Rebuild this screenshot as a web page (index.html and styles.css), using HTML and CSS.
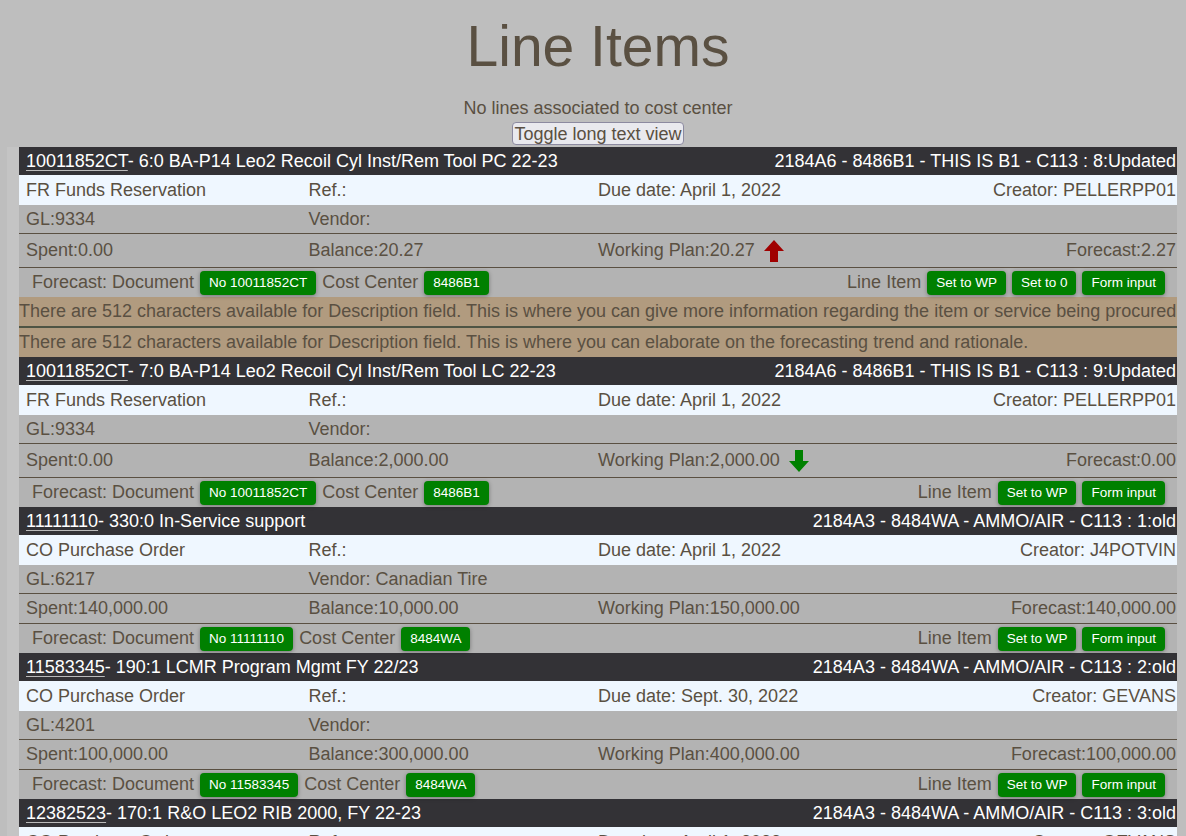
FILE: index.html
```html
<!DOCTYPE html>
<html>
<head>
<meta charset="utf-8">
<title>Line Items</title>
<link rel="stylesheet" href="styles.css">
</head>
<body>
<h1 class="title">Line Items</h1>
<p class="note">No lines associated to cost center</p>
<div class="toggle-wrap"><button class="toggle">Toggle long text view</button></div>
<div class="list">

  <div class="item">
    <div class="head"><span><a class="doc">10011852CT</a>- 6:0 BA-P14 Leo2 Recoil Cyl Inst/Rem Tool PC 22-23</span><span>2184A6 - 8486B1 - THIS IS B1 - C113 : 8:Updated</span></div>
    <div class="row info"><div class="cell">FR Funds Reservation</div><div class="cell">Ref.:</div><div class="cell">Due date: April 1, 2022</div><div class="cell right">Creator: PELLERPP01</div></div>
    <div class="row line"><div class="cell">GL:9334</div><div class="cell">Vendor:</div><div class="cell"></div><div class="cell"></div></div>
    <div class="row line tall"><div class="cell">Spent:0.00</div><div class="cell">Balance:20.27</div><div class="cell">Working Plan:20.27 <svg class="arrow up" viewBox="0 0 20 22" width="20" height="22"><path d="M10 0 L20 11 L14 11 L14 22 L6 22 L6 11 L0 11 Z"/></svg></div><div class="cell right">Forecast:2.27</div></div>
    <div class="row actions"><div class="group">Forecast: Document <span class="btn">No 10011852CT</span> Cost Center <span class="btn">8486B1</span></div><div class="group">Line Item <span class="btn">Set to WP</span> <span class="btn">Set to 0</span> <span class="btn">Form input</span></div></div>
    <div class="desc">There are 512 characters available for Description field. This is where you can give more information regarding the item or service being procured</div>
    <div class="desc sep">There are 512 characters available for Description field. This is where you can elaborate on the forecasting trend and rationale.</div>
  </div>

  <div class="item">
    <div class="head"><span><a class="doc">10011852CT</a>- 7:0 BA-P14 Leo2 Recoil Cyl Inst/Rem Tool LC 22-23</span><span>2184A6 - 8486B1 - THIS IS B1 - C113 : 9:Updated</span></div>
    <div class="row info"><div class="cell">FR Funds Reservation</div><div class="cell">Ref.:</div><div class="cell">Due date: April 1, 2022</div><div class="cell right">Creator: PELLERPP01</div></div>
    <div class="row line"><div class="cell">GL:9334</div><div class="cell">Vendor:</div><div class="cell"></div><div class="cell"></div></div>
    <div class="row line tall"><div class="cell">Spent:0.00</div><div class="cell">Balance:2,000.00</div><div class="cell">Working Plan:2,000.00 <svg class="arrow down" viewBox="0 0 20 22" width="20" height="22"><path d="M6 0 L14 0 L14 11 L20 11 L10 22 L0 11 L6 11 Z"/></svg></div><div class="cell right">Forecast:0.00</div></div>
    <div class="row actions"><div class="group">Forecast: Document <span class="btn">No 10011852CT</span> Cost Center <span class="btn">8486B1</span></div><div class="group">Line Item <span class="btn">Set to WP</span> <span class="btn">Form input</span></div></div>
  </div>

  <div class="item">
    <div class="head"><span><a class="doc">11111110</a>- 330:0 In-Service support</span><span>2184A3 - 8484WA - AMMO/AIR - C113 : 1:old</span></div>
    <div class="row info"><div class="cell">CO Purchase Order</div><div class="cell">Ref.:</div><div class="cell">Due date: April 1, 2022</div><div class="cell right">Creator: J4POTVIN</div></div>
    <div class="row line"><div class="cell">GL:6217</div><div class="cell">Vendor: Canadian Tire</div><div class="cell"></div><div class="cell"></div></div>
    <div class="row line"><div class="cell">Spent:140,000.00</div><div class="cell">Balance:10,000.00</div><div class="cell">Working Plan:150,000.00</div><div class="cell right">Forecast:140,000.00</div></div>
    <div class="row actions"><div class="group">Forecast: Document <span class="btn">No 11111110</span> Cost Center <span class="btn">8484WA</span></div><div class="group">Line Item <span class="btn">Set to WP</span> <span class="btn">Form input</span></div></div>
  </div>

  <div class="item">
    <div class="head"><span><a class="doc">11583345</a>- 190:1 LCMR Program Mgmt FY 22/23</span><span>2184A3 - 8484WA - AMMO/AIR - C113 : 2:old</span></div>
    <div class="row info"><div class="cell">CO Purchase Order</div><div class="cell">Ref.:</div><div class="cell">Due date: Sept. 30, 2022</div><div class="cell right">Creator: GEVANS</div></div>
    <div class="row line"><div class="cell">GL:4201</div><div class="cell">Vendor:</div><div class="cell"></div><div class="cell"></div></div>
    <div class="row line"><div class="cell">Spent:100,000.00</div><div class="cell">Balance:300,000.00</div><div class="cell">Working Plan:400,000.00</div><div class="cell right">Forecast:100,000.00</div></div>
    <div class="row actions"><div class="group">Forecast: Document <span class="btn">No 11583345</span> Cost Center <span class="btn">8484WA</span></div><div class="group">Line Item <span class="btn">Set to WP</span> <span class="btn">Form input</span></div></div>
  </div>

  <div class="item">
    <div class="head"><span><a class="doc">12382523</a>- 170:1 R&amp;O LEO2 RIB 2000, FY 22-23</span><span>2184A3 - 8484WA - AMMO/AIR - C113 : 3:old</span></div>
    <div class="row info"><div class="cell">CO Purchase Order</div><div class="cell">Ref.:</div><div class="cell">Due date: April 1, 2022</div><div class="cell right">Creator: GEVANS</div></div>
  </div>

</div>
</body>
</html>
```

FILE: styles.css
```css
html, body {
  margin: 0;
  padding: 0;
}
body {
  background: #bebebe;
  color: #5a5042;
  font-family: "Liberation Sans", Arial, sans-serif;
  font-size: 18px;
}
.title {
  margin: 0;
  padding: 13px 0 0 10px;
  font-size: 57px;
  font-weight: normal;
  line-height: 66px;
  text-align: center;
  color: #5a5042;
}
.note {
  margin: 19px 0 0;
  padding-left: 10px;
  line-height: 21px;
  text-align: center;
}
.toggle-wrap {
  text-align: center;
  padding-left: 10px;
  height: 28px;
}
.toggle {
  font-family: "Liberation Sans", Arial, sans-serif;
  font-size: 18px;
  color: #5a5042;
  background: #e9e9ee;
  border: 1px solid #8c8aa0;
  border-radius: 4px;
  padding: 0 1px;
  height: 23px;
  line-height: 20px;
  margin-top: 3px;
}
.list {
  margin: 0 9px 0 7px;
  padding-left: 12px;
  background: #c4c4c4;
}
.head {
  display: flex;
  justify-content: space-between;
  background: #333236;
  color: #ffffff;
  height: 28px;
  line-height: 28px;
  padding: 0 1px 0 7px;
  white-space: nowrap;
}
.doc {
  color: #ffffff;
  text-decoration: underline;
  text-decoration-color: #bbbbbb;
  text-underline-offset: 3px;
}
.row {
  display: grid;
  grid-template-columns: repeat(4, 1fr);
  background: #b3b3b3;
}
.cell {
  display: flex;
  align-items: center;
  white-space: nowrap;
}
.cell:first-child {
  padding-left: 7px;
}
.cell.right {
  justify-content: flex-end;
  padding-right: 1px;
}
.info {
  background: #eff7ff;
  height: 30px;
}
.line {
  height: 28px;
  border-bottom: 1px solid #5a5042;
}
.line.tall {
  height: 33px;
}
.line + .line {
  height: 29px;
}
.line + .line.tall {
  height: 33px;
}
.arrow {
  margin-left: 9px;
}
.arrow.up { fill: #a00000; }
.arrow.down { fill: #008000; }
.actions {
  display: flex;
  justify-content: space-between;
  align-items: center;
  height: 29px;
  padding: 0 12px 0 13px;
}
.group {
  display: flex;
  align-items: center;
  gap: 6px;
  white-space: nowrap;
}
.btn {
  display: inline-block;
  background: #008000;
  color: #ffffff;
  font-size: 13.5px;
  line-height: 24px;
  height: 24px;
  padding: 0 9px;
  border-radius: 4px;
  box-shadow: 0 1px 4px rgba(0,0,0,0.35);
}
.desc {
  background: #b19b7f;
  line-height: 29px;
  height: 29px;
  white-space: nowrap;
  overflow: hidden;
}
.desc.sep {
  border-top: 2px solid #4e5444;
}
```
